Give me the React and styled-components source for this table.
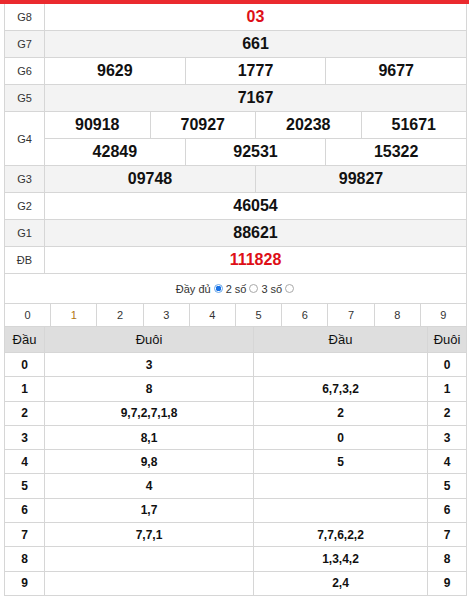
import React from "react";
import styled, { createGlobalStyle } from "styled-components";

const Global = createGlobalStyle`
  html, body { margin: 0; padding: 0; background: #fff; }
  body { font-family: "Liberation Sans", Arial, sans-serif; color: #222; }
`;

const BORDER = "#d6d6d6";

const TopBar = styled.div`
  height: 4px;
  background: #ea2a2e;
`;

const Wrapper = styled.div`
  margin: 0 2px 0 4px;
  border-left: 1px solid ${BORDER};
  border-right: 1px solid ${BORDER};
`;

const PrizeRow = styled.div`
  display: flex;
  background: ${(p) => (p.$alt ? "#f3f3f3" : "#fff")};
  border-bottom: 1px solid ${BORDER};
`;

const Label = styled.div`
  width: 40px;
  flex: none;
  box-sizing: border-box;
  border-right: 1px solid ${BORDER};
  display: flex;
  align-items: center;
  justify-content: center;
  font-size: 11px;
  color: #333;
`;

const Lines = styled.div`
  flex: 1;
  display: flex;
  flex-direction: column;
`;

const Line = styled.div`
  display: flex;
  height: 26px;
  & + & { border-top: 1px solid ${BORDER}; }
`;

const Prize = styled.div`
  flex: 1;
  display: flex;
  align-items: center;
  justify-content: center;
  font-size: 16px;
  font-weight: bold;
  color: ${(p) => (p.$red ? "#de0f17" : "#111")};
  & + & { border-left: 1px solid ${BORDER}; }
`;

const Controls = styled.div`
  height: 29px;
  display: flex;
  align-items: center;
  justify-content: center;
  gap: 2px;
  font-size: 11px;
  color: #333;
  border-bottom: 1px solid ${BORDER};
`;

const Radio = styled.span`
  display: inline-block;
  width: 9px;
  height: 9px;
  box-sizing: border-box;
  border-radius: 50%;
  border: 1px solid ${(p) => (p.$on ? "#6aa8e8" : "#a9a9a9")};
  background: ${(p) => (p.$on ? "radial-gradient(circle, #1a73e8 0 2.6px, #fff 3px)" : "#fff")};
  margin: 0 1px;
`;

const DigitRow = styled.div`
  display: flex;
  height: 23px;
  border-bottom: 1px solid ${BORDER};
  box-sizing: border-box;
`;

const Digit = styled.div`
  flex: 1;
  display: flex;
  align-items: center;
  justify-content: center;
  font-size: 11px;
  color: ${(p) => (p.$hot ? "#b07510" : "#333")};
  & + & { border-left: 1px solid ${BORDER}; }
`;

const LotoGrid = styled.div`
  display: grid;
  grid-template-columns: 40px 209px 174px 1fr;
`;

const Cell = styled.div`
  box-sizing: border-box;
  height: ${(p) => (p.$head ? "26px" : "24.3px")};
  display: flex;
  align-items: center;
  justify-content: center;
  font-size: ${(p) => (p.$head ? "13px" : "12px")};
  font-weight: ${(p) => (p.$head ? "normal" : "bold")};
  background: ${(p) => (p.$head ? "#dedede" : "#fff")};
  color: #111;
  border-bottom: 1px solid ${BORDER};
  border-right: ${(p) => (p.$last ? "none" : `1px solid ${BORDER}`)};
`;

const prizes = [
  { label: "G8", lines: [["03"]], red: true },
  { label: "G7", lines: [["661"]] },
  { label: "G6", lines: [["9629", "1777", "9677"]] },
  { label: "G5", lines: [["7167"]] },
  { label: "G4", lines: [["90918", "70927", "20238", "51671"], ["42849", "92531", "15322"]] },
  { label: "G3", lines: [["09748", "99827"]] },
  { label: "G2", lines: [["46054"]] },
  { label: "G1", lines: [["88621"]] },
  { label: "ĐB", lines: [["111828"]], red: true },
];

const loto = [
  ["0", "3", "", "0"],
  ["1", "8", "6,7,3,2", "1"],
  ["2", "9,7,2,7,1,8", "2", "2"],
  ["3", "8,1", "0", "3"],
  ["4", "9,8", "5", "4"],
  ["5", "4", "", "5"],
  ["6", "1,7", "", "6"],
  ["7", "7,7,1", "7,7,6,2,2", "7"],
  ["8", "", "1,3,4,2", "8"],
  ["9", "", "2,4", "9"],
];

export default function App() {
  return (
    <>
      <Global />
      <TopBar />
      <Wrapper>
        {prizes.map((p, i) => (
          <PrizeRow key={p.label} $alt={i % 2 === 1}>
            <Label>{p.label}</Label>
            <Lines>
              {p.lines.map((line, j) => (
                <Line key={j}>
                  {line.map((n, k) => (
                    <Prize key={k} $red={p.red}>{n}</Prize>
                  ))}
                </Line>
              ))}
            </Lines>
          </PrizeRow>
        ))}
        <Controls>
          Đầy đủ <Radio $on /> 2 số <Radio /> 3 số <Radio />
        </Controls>
        <DigitRow>
          {Array.from({ length: 10 }, (_, i) => (
            <Digit key={i} $hot={i === 1}>{i}</Digit>
          ))}
        </DigitRow>
        <LotoGrid>
          <Cell $head>Đầu</Cell>
          <Cell $head>Đuôi</Cell>
          <Cell $head>Đầu</Cell>
          <Cell $head $last>Đuôi</Cell>
          {loto.map((r) =>
            r.map((v, k) => (
              <Cell key={r[0] + "-" + k} $last={k === 3}>{v}</Cell>
            ))
          )}
        </LotoGrid>
      </Wrapper>
    </>
  );
}
